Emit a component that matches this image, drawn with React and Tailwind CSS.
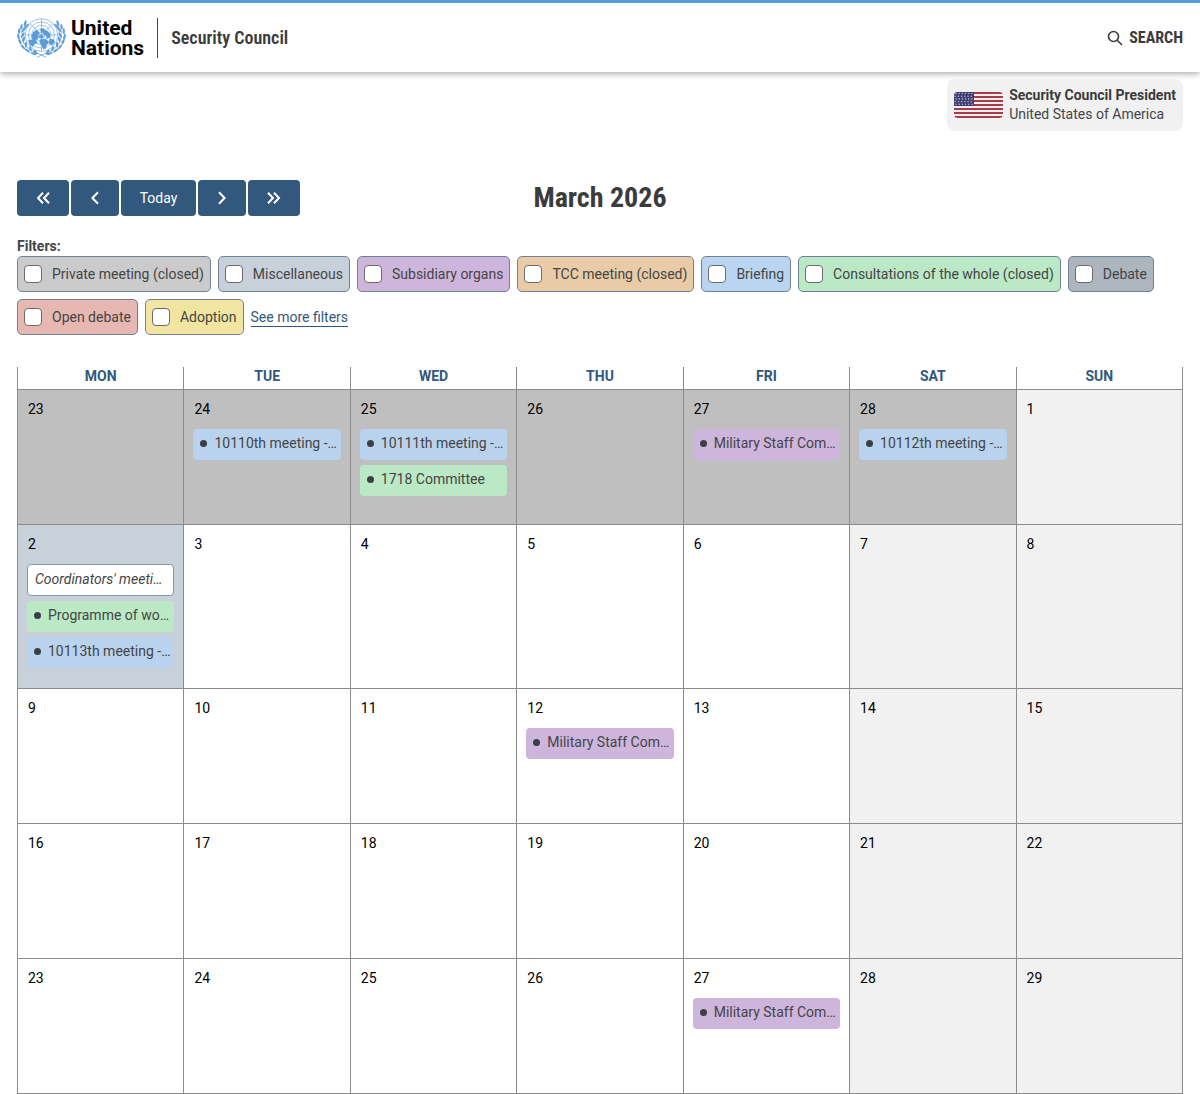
import React from 'react';
import clsx from 'clsx';

const FILTERS = [
    { id: 'private', label: 'Private meeting (closed)', color: 'bg-[#cbcbcb]' },
    { id: 'misc', label: 'Miscellaneous', color: 'bg-[#c8d1d9]' },
    { id: 'subsidiary', label: 'Subsidiary organs', color: 'bg-[#ceb5dc]' },
    { id: 'tcc', label: 'TCC meeting (closed)', color: 'bg-[#e9cba8]' },
    { id: 'briefing', label: 'Briefing', color: 'bg-[#b9d5f0]' },
    { id: 'consultations', label: 'Consultations of the whole (closed)', color: 'bg-[#bbe9c6]' },
    { id: 'debate', label: 'Debate', color: 'bg-[#adb5be]' },
    { id: 'open-debate', label: 'Open debate', color: 'bg-[#e7b8b2]' },
    { id: 'adoption', label: 'Adoption', color: 'bg-[#f2e5a2]' },
];

const EVENT_COLORS = {
    briefing: 'bg-[#b9d3ee]',
    closed: 'bg-[#bbe9c6]',
    subsidiary: 'bg-[#ceb5dc]',
};

const WEEKDAYS = ['MON', 'TUE', 'WED', 'THU', 'FRI', 'SAT', 'SUN'];

const WEEKS = [
    [
        { day: 23, past: true },
        { day: 24, past: true, events: [{ title: '10110th meeting -…', type: 'briefing' }] },
        {
            day: 25,
            past: true,
            events: [
                { title: '10111th meeting -…', type: 'briefing' },
                { title: '1718 Committee', type: 'closed' },
            ],
        },
        { day: 26, past: true },
        { day: 27, past: true, events: [{ title: 'Military Staff Com…', type: 'subsidiary' }] },
        { day: 28, past: true, events: [{ title: '10112th meeting -…', type: 'briefing' }] },
        { day: 1 },
    ],
    [
        {
            day: 2,
            today: true,
            events: [
                { title: "Coordinators' meeti…", type: 'informal' },
                { title: 'Programme of wo…', type: 'closed' },
                { title: '10113th meeting -…', type: 'briefing' },
            ],
        },
        { day: 3 }, { day: 4 }, { day: 5 }, { day: 6 }, { day: 7 }, { day: 8 },
    ],
    [
        { day: 9 }, { day: 10 }, { day: 11 },
        { day: 12, events: [{ title: 'Military Staff Com…', type: 'subsidiary' }] },
        { day: 13 }, { day: 14 }, { day: 15 },
    ],
    [{ day: 16 }, { day: 17 }, { day: 18 }, { day: 19 }, { day: 20 }, { day: 21 }, { day: 22 }],
    [
        { day: 23 }, { day: 24 }, { day: 25 }, { day: 26 },
        { day: 27, events: [{ title: 'Military Staff Com…', type: 'subsidiary' }] },
        { day: 28 }, { day: 29 },
    ],
];

// Laurel leaves along one side of the emblem: [x, y, rotation]
const LEAVES = [
    [11, 8, 20], [6, 13, 10], [3, 19, 0], [2, 26, -12], [4, 33, -25], [8, 40, -40], [14, 45, -55], [22, 49, -68],
    [13, 12, 50], [9, 17, 42], [8, 24, 30], [9, 30, 15], [12, 37, 0], [18, 42, -15], [25, 47, -35],
];

const Laurel = () => (
    <g>
        <path d="M13 9C2 20 4 38 24 47q8 3 15 7" fill="none" strokeWidth="1" />
        {LEAVES.map(([x, y, angle]) => (
            <ellipse key={`${x}-${y}`} cx={x} cy={y} rx="1.5" ry="4" transform={`rotate(${angle} ${x} ${y})`} stroke="none" />
        ))}
    </g>
);

const Emblem = () => (
    <svg viewBox="0 0 66 56" className="h-[42px] w-[49px]" fill="#5b9bd8" stroke="#5b9bd8" aria-hidden="true">
        <Laurel />
        <g transform="translate(66 0) scale(-1 1)"><Laurel /></g>
        <g fill="none" strokeWidth="0.8">
            <circle cx="33" cy="24" r="22" fill="white" />
            <circle cx="33" cy="24" r="17.5" />
            <circle cx="33" cy="24" r="13" />
            <circle cx="33" cy="24" r="8.5" />
            <circle cx="33" cy="24" r="4" />
            <path d="M33 2v44M11 24h44M17.5 8.5l31 31M48.5 8.5l-31 31" />
        </g>
        <g stroke="none">
            <path d="M22 20l4-3 3 2 1 3-2 3 1 3-4 3-5-1-1-4z" />
            <path d="M31 16l5-1 2 3 4 1 3 4-1 5-4 1-1-4-3-1-1-3-3-1z" />
            <path d="M15 31l5-1 6 1 2 4-4 1-3 4-4-3z" />
            <path d="M31 30l5-1 5 2 2 4-3 2-1 5-4 1-2-6-3-3z" />
            <path d="M44 29l6 1 1 4-4 4-4-3z" />
            <path d="M29 25l4-1 3 2-2 3-4-1z" />
        </g>
    </svg>
);

const UsFlag = () => (
    <svg viewBox="0 0 49 26" className="h-[26px] w-[49px] rounded" role="img" aria-label="Flag of the United States">
        <rect width="49" height="26" fill="#f4eeee" />
        {[0, 4, 8, 12, 16, 20, 24].map((y) => (
            <rect key={y} y={y} width="49" height="2" fill="#a73b48" />
        ))}
        <rect width="20" height="14" fill="#3c3b6e" />
        {[1.5, 4.2, 6.9, 9.6, 12.3].map((y, row) =>
            [2, 5.2, 8.4, 11.6, 14.8, 18].map((x) => (
                <circle key={`${x}-${y}`} cx={x - (row % 2) * 0.8} cy={y} r="0.8" fill="#b4b4cf" />
            ))
        )}
    </svg>
);

const Chevron = ({ double, flip }) => (
    <svg
        viewBox="0 0 16 16"
        className={clsx('size-4', flip && '-scale-x-100')}
        fill="none"
        stroke="currentColor"
        strokeWidth="2"
        aria-hidden="true"
    >
        {double ? <path d="M8 2.8L3 8l5 5.2M14 2.8L9 8l5 5.2" /> : <path d="M11 2.3L5.4 8l5.6 5.7" />}
    </svg>
);

const NavButton = ({ label, children, className }) => (
    <button
        type="button"
        aria-label={label}
        className={clsx('flex h-9 items-center justify-center rounded bg-[#32587d] text-sm text-white', className)}
    >
        {children}
    </button>
);

const Filter = ({ filter }) => (
    <label
        htmlFor={filter.id}
        className={clsx('flex h-9 items-center gap-[10px] rounded-[5px] border border-[#6f8296] px-[6px]', filter.color)}
    >
        <input
            id={filter.id}
            type="checkbox"
            className="size-[18px] appearance-none rounded border border-[#6b6b6b] bg-white checked:bg-[#32587d]"
        />
        {filter.label}
    </label>
);

const CalendarEvent = ({ event }) => {
    if (event.type === 'informal') {
        return (
            <a href="#event" className="block h-8 truncate rounded border border-[#7d97b3] bg-white px-[7px] leading-7 italic">
                {event.title}
            </a>
        );
    }

    return (
        <a
            href="#event"
            className={clsx('flex h-[31px] items-center gap-[7px] rounded px-[7px] pb-[3px]', EVENT_COLORS[event.type])}
        >
            <span className="size-[7px] shrink-0 rounded-full bg-[#3b3f44]" />
            <span className="whitespace-nowrap">{event.title}</span>
        </a>
    );
};

const DayCell = ({ date, weekend }) => (
    <td
        className={clsx(
            'h-[135px] border border-[#8c8c8c] px-[9px] pt-[9px] pb-5 align-top',
            date.past && 'bg-[#bfbfbf]',
            date.today && 'bg-[#c8d1d9]',
            weekend && !date.past && 'bg-[#f1f1f1]'
        )}
    >
        <div className="mb-[10px] px-px leading-5 text-black">{date.day}</div>
        <div className="flex flex-col gap-[5px]">
            {date.events?.map((event) => (
                <CalendarEvent key={event.title} event={event} />
            ))}
        </div>
    </td>
);

const App = () => {
    return (
        <div className="min-h-screen bg-white font-[Roboto,sans-serif] text-sm text-[#454545]">
            <header className="flex h-[72px] items-center justify-between border-t-[3px] border-[#5b9bd8] px-[17px] font-['Roboto_Condensed','Liberation_Sans_Narrow',sans-serif] font-bold shadow-[0_1px_7px_rgba(0,0,0,0.4)]">
                <div className="flex items-center">
                    <a href="#home" className="flex items-center gap-[5px] font-[Roboto,sans-serif] text-[21px] leading-5 text-black">
                        <Emblem />
                        <span>United<br />Nations</span>
                    </a>
                    <div className="mx-[13px] h-10 w-px bg-[#454545]" />
                    <a href="#council" className="text-lg font-semibold text-[#3b3b3b]">Security Council</a>
                </div>
                <button type="button" className="flex items-center gap-[6px] text-base text-[#3b3b3b]">
                    <svg viewBox="0 0 16 16" className="size-4" fill="none" stroke="currentColor" strokeWidth="1.6" aria-hidden="true">
                        <circle cx="6.5" cy="6.5" r="5" />
                        <path d="M10 10l5 5" />
                    </svg>
                    SEARCH
                </button>
            </header>

            <main className="px-[17px]">
                <div className="flex justify-end pt-[7px]">
                    <div className="flex items-center gap-[6px] rounded-lg bg-[#f1f1f1] px-[7px] py-[7px] leading-[19px]">
                        <UsFlag />
                        <div>
                            <div className="font-bold text-[#3b3b3b]">Security Council President</div>
                            <div>United States of America</div>
                        </div>
                    </div>
                </div>

                <div className="mt-[49px] grid grid-cols-[1fr_auto_1fr] items-center">
                    <div className="flex gap-[2px]">
                        <NavButton label="Previous year" className="w-[52px]"><Chevron double /></NavButton>
                        <NavButton label="Previous month" className="w-12"><Chevron /></NavButton>
                        <NavButton label="Today" className="w-[75px]">Today</NavButton>
                        <NavButton label="Next month" className="w-12"><Chevron flip /></NavButton>
                        <NavButton label="Next year" className="w-[52px]"><Chevron double flip /></NavButton>
                    </div>
                    <h1 className="font-['Roboto_Condensed','Liberation_Sans_Narrow',sans-serif] text-[28px] leading-9 font-bold text-[#3b3b3b]">
                        March 2026
                    </h1>
                </div>

                <div className="mt-5 leading-5 font-bold">Filters:</div>
                <div className="flex flex-wrap items-center gap-[7px]">
                    {FILTERS.map((filter) => (
                        <Filter key={filter.id} filter={filter} />
                    ))}
                    <a href="#filters" className="border-b border-[#32587d] leading-[18px] text-[#32587d]">See more filters</a>
                </div>

                <table className="mt-8 w-full table-fixed border-collapse">
                    <thead>
                        <tr>
                            {WEEKDAYS.map((name) => (
                                <th key={name} scope="col" className="h-[22px] border-x border-[#8c8c8c] p-0 pb-1 leading-[18px] font-bold text-[#32587d]">
                                    {name}
                                </th>
                            ))}
                        </tr>
                    </thead>
                    <tbody>
                        {WEEKS.map((week, index) => (
                            <tr key={index}>
                                {week.map((date, weekday) => (
                                    <DayCell key={date.day} date={date} weekend={weekday > 4} />
                                ))}
                            </tr>
                        ))}
                    </tbody>
                </table>
            </main>
        </div>
    );
};

export default App;
